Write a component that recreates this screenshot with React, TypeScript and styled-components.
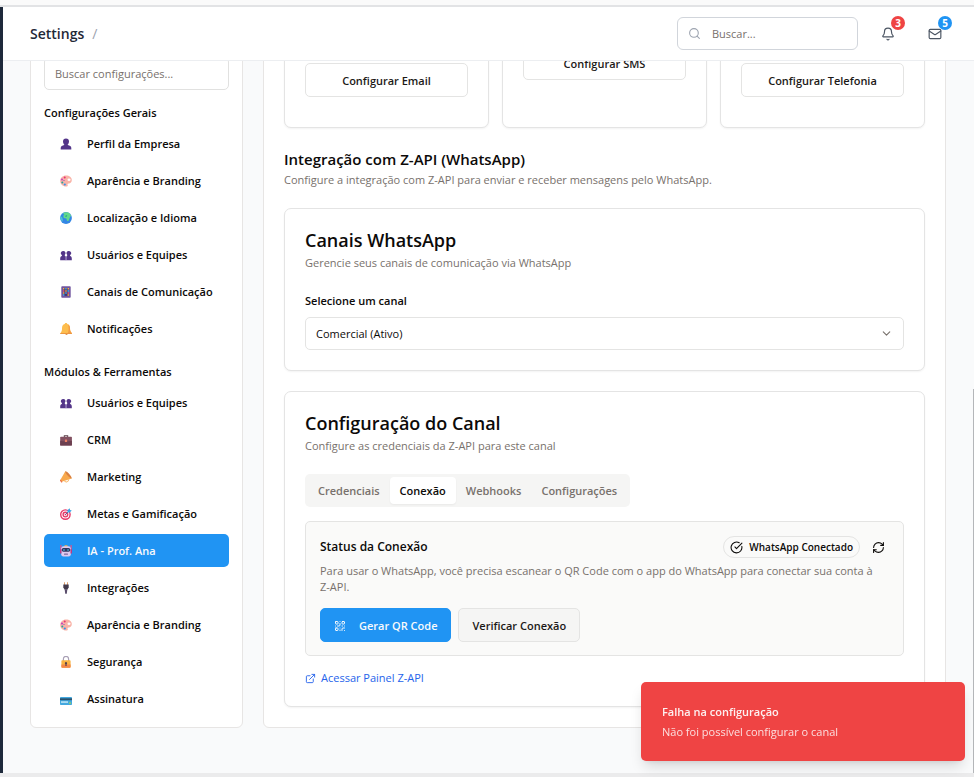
import React, { useState } from "react";
import styled, { createGlobalStyle, css } from "styled-components";
import { Bell, ChevronDown, CircleCheckBig, ExternalLink, Mail, QrCode, RefreshCw, Search } from "lucide-react";

const Global = createGlobalStyle`
  *, *::before, *::after { box-sizing: border-box; }
  body { margin: 0; background: #f9fafb; }
  body, button, input, select {
    font-family: "Open Sans", "Noto Sans", sans-serif;
    font-size: 11px;
    line-height: 16px;
    color: #0c0a09;
  }
  h1, h2, h3, h4, p, ul { margin: 0; padding: 0; font-weight: inherit; }
  ul { list-style: none; }
`;

const Page = styled.div`
  height: 100vh;
  display: flex;
  flex-direction: column;
  overflow: hidden;
`;
const TopStrip = styled.div`
  flex: none;
  height: 7px;
  background: #fafafa;
  border-bottom: 2px solid #e2e3e5;
`;
const BottomStrip = styled.div`
  flex: none;
  height: 4px;
  background: #ebebec;
`;
const Shell = styled.div`
  flex: 1;
  min-height: 0;
  display: flex;
`;
const Rail = styled.div`
  flex: none;
  width: 3px;
  background: #1e293b;
`;
const Column = styled.div`
  flex: 1;
  min-width: 0;
  display: flex;
  flex-direction: column;
`;
const Header = styled.header`
  flex: none;
  height: 54px;
  padding: 0 32px 0 27px;
  display: flex;
  align-items: center;
  background: #fff;
  border-bottom: 1px solid #eceef1;
`;
const PageTitle = styled.h1`
  font-size: 14px;
  line-height: 20px;
  font-weight: 600;
  color: #1f2937;
`;
const Slash = styled.span`
  margin-left: 8px;
  flex: 1;
  font-size: 14px;
  color: #9ca3af;
`;
const SearchBox = styled.label`
  width: 181px;
  height: 33px;
  padding: 0 12px 0 10px;
  display: flex;
  align-items: center;
  gap: 11px;
  border: 1px solid #d1d5db;
  border-radius: 6px;
  color: #9ca3af;
  svg { flex: none; }
`;
const BareInput = styled.input`
  min-width: 0;
  flex: 1;
  border: 0;
  padding: 0;
  outline: 0;
  background: none;
  &::placeholder { color: #78716c; opacity: 1; }
`;
const HeaderButton = styled.button<{ $gap: number }>`
  position: relative;
  width: 14px;
  height: 14px;
  margin-left: ${(p) => p.$gap}px;
  padding: 0;
  border: 0;
  background: none;
  color: #4b5563;
  svg { display: block; }
`;
const Count = styled.span<{ $color: string }>`
  position: absolute;
  top: -11px;
  left: 10px;
  width: 14px;
  height: 14px;
  border-radius: 50%;
  background: ${(p) => p.$color};
  color: #fff;
  font-size: 10px;
  line-height: 14px;
  font-weight: 700;
  text-align: center;
`;
const ScrollArea = styled.div`
  position: relative;
  flex: 1;
  min-height: 0;
  overflow: hidden;
  display: flex;
  flex-direction: column;
  justify-content: flex-end;
  padding: 0 28px 45px 27px;
  background: #f9fafb;
`;
const ScrollThumb = styled.div`
  position: absolute;
  right: 0;
  bottom: 0;
  width: 1px;
  height: 54%;
  background: #b4b6b9;
`;
const Columns = styled.div`
  display: flex;
  gap: 20px;
`;
const Panel = css`
  background: #fff;
  border: 1px solid #e7e5e4;
  border-radius: 6px;
`;
const Sidebar = styled.nav`
  ${Panel}
  flex: none;
  width: 213px;
  padding: 12px 13px;
  display: flex;
  flex-direction: column;
  justify-content: flex-end;
`;
const FilterBox = styled.label`
  height: 33px;
  padding: 0 10px;
  display: flex;
  align-items: center;
  border: 1px solid #e1e1e0;
  border-radius: 5px;
`;
const GroupTitle = styled.h2<{ $gap: number }>`
  margin: ${(p) => p.$gap}px 0 5px;
  font-size: 11px;
  line-height: 18px;
  font-weight: 600;
`;
const NavList = styled.ul`
  display: flex;
  flex-direction: column;
  gap: 4px;
`;
const NavButton = styled.button<{ $active?: boolean }>`
  width: 100%;
  height: 33px;
  padding: 0 14px;
  display: flex;
  align-items: center;
  gap: 14px;
  border: 0;
  border-radius: 5px;
  text-align: left;
  font-weight: 600;
  white-space: nowrap;
  background: ${(p) => (p.$active ? "#2094f3" : "transparent")};
  color: ${(p) => (p.$active ? "#f8fafc" : "#0c0a09")};
  svg { flex: none; margin: 0 1px 0 2px; }
`;
const Main = styled.main`
  ${Panel}
  flex: 1;
  min-width: 0;
  padding: 20px;
`;
const CardRow = styled.div`
  display: grid;
  grid-template-columns: repeat(3, minmax(0, 1fr));
  gap: 13px;
`;
const Card = styled.section`
  background: #fff;
  border: 1px solid #e4e4e4;
  border-radius: 7px;
  padding: 20px;
  box-shadow: 0 1px 2px rgba(0, 0, 0, 0.05);
`;
const ServiceCard = styled(Card)`
  padding-bottom: 30px;
`;
const ServiceIntro = styled.div<{ $lines: number }>`
  min-height: ${(p) => p.$lines * 17}px;
`;
const Button = styled.button<{ $kind?: "primary" | "muted"; $wide?: boolean }>`
  width: ${(p) => (p.$wide ? "100%" : "auto")};
  height: 34px;
  padding: 2px 13px 0;
  display: inline-flex;
  align-items: center;
  justify-content: center;
  gap: 13px;
  border-radius: 5px;
  border: 1px solid ${(p) => (p.$kind === "primary" ? "#2094f3" : "#e4e4e3")};
  background: ${(p) => (p.$kind === "primary" ? "#2094f3" : p.$kind === "muted" ? "#f5f5f4" : "#fff")};
  color: ${(p) => (p.$kind === "primary" ? "#f8fafc" : "#1c1917")};
  font-weight: 600;
  white-space: nowrap;
`;
const SectionHead = styled.div`
  margin: 22px 0 20px;
`;
const SectionTitle = styled.h2`
  font-size: 15px;
  line-height: 18px;
  font-weight: 600;
`;
const CardTitle = styled.h3`
  font-size: 18px;
  line-height: 22px;
  font-weight: 600;
`;
const Muted = styled.p`
  margin-top: 4px;
  color: #78716c;
`;
const Label = styled.label`
  display: block;
  margin: 22px 0 8px;
  font-weight: 600;
`;
const SelectWrap = styled.div`
  display: grid;
  align-items: center;
  > * { grid-area: 1 / 1; }
  svg { justify-self: end; margin-right: 11px; pointer-events: none; color: #78716c; }
`;
const Select = styled.select`
  appearance: none;
  width: 100%;
  height: 33px;
  padding: 0 30px 0 10px;
  border: 1px solid #e4e4e3;
  border-radius: 5px;
  background: #fff;
`;
const ChannelCard = styled(Card)`
  margin-top: 20px;
`;
const Tabs = styled.div`
  width: fit-content;
  height: 33px;
  margin: 20px 0 14px;
  padding: 3px;
  display: flex;
  background: #f5f5f4;
  border-radius: 5px;
`;
const Tab = styled.button<{ $active: boolean }>`
  padding: 0 10px;
  border: 0;
  border-radius: 4px;
  font-weight: 600;
  background: ${(p) => (p.$active ? "#fff" : "transparent")};
  color: ${(p) => (p.$active ? "#0c0a09" : "#78716c")};
  box-shadow: ${(p) => (p.$active ? "0 1px 2px rgba(0,0,0,0.05)" : "none")};
`;
const StatusPanel = styled.div`
  padding: 14px 14px 13px;
  border: 1px solid #e4e4e3;
  border-radius: 5px;
  background: #fafaf9;
`;
const StatusHead = styled.div`
  display: flex;
  align-items: center;
`;
const StatusTitle = styled.h4`
  flex: 1;
  font-size: 12px;
  font-weight: 600;
`;
const Badge = styled.span`
  height: 22px;
  padding: 0 6px;
  display: inline-flex;
  align-items: center;
  gap: 6px;
  border: 1px solid #e4e4e3;
  border-radius: 11px;
  font-size: 10px;
  font-weight: 600;
`;
const IconButton = styled.button`
  width: 22px;
  height: 22px;
  margin: 0 0 0 7px;
  padding: 0;
  display: grid;
  place-items: center;
  border: 0;
  background: none;
`;
const StatusText = styled.p`
  margin: 5px 0 13px;
  color: #78716c;
`;
const NoBreak = styled.span`
  white-space: nowrap;
`;
const Actions = styled.div`
  display: flex;
  gap: 7px;
`;
const PanelLink = styled.a`
  width: fit-content;
  margin-top: 14px;
  display: flex;
  align-items: center;
  gap: 5px;
  color: #2563eb;
  text-decoration: none;
`;
const Toast = styled.div`
  position: fixed;
  right: 9px;
  bottom: 16px;
  width: 324px;
  padding: 21px;
  border-radius: 5px;
  background: #ef4444;
  color: #fbdede;
  box-shadow: 0 8px 14px -3px rgba(0, 0, 0, 0.15), 0 3px 6px -4px rgba(0, 0, 0, 0.12);
`;
const ToastTitle = styled.p`
  margin: 1px 0 4px;
  font-weight: 600;
  color: #fdf0f0;
`;

type EmojiName =
  | "person" | "palette" | "globe" | "people" | "grid" | "bell" | "briefcase"
  | "horn" | "target" | "robot" | "plug" | "lock" | "card";

const drawings: Record<EmojiName, React.ReactNode> = {
  person: (
    <g fill="#533589">
      <path d="M6 0.4a3 3 0 0 1 3 3c0 1.600-.8 2.800-1.600 3.500v.7H4.600v-.7C3.800 6.200 3 5 3 3.400a3 3 0 0 1 3-3z" />
      <path d="M.7 11.500V10c0-1.700 1.700-2.500 3.500-2.900h3.600c1.800.4 3.500 1.200 3.500 2.900v1.500z" />
    </g>
  ),
  palette: (
    <>
      <path d="M6 .6C9.400.6 11.800 2.600 11.800 5c0 2.300-1.500 3.500-3.200 3.400-1.200 0-1.200.8-.9 1.500.4 1-.4 1.700-1.700 1.700C2.700 11.600.2 9.200.2 6.100.2 3 2.700.6 6 .6z" fill="#f9b3a7" />
      <ellipse cx="9" cy="4.800" rx="1.500" ry="1.200" fill="#fff" />
      <circle cx="2" cy="4.500" r="1" fill="#c13fc4" />
      <circle cx="4.700" cy="2.500" r="1" fill="#e73573" />
      <circle cx="2.300" cy="7.400" r="1" fill="#26a69a" />
      <circle cx="4.800" cy="9.500" r="1.100" fill="#3496ee" />
      <circle cx="4" cy="5.500" r=".6" fill="#7846b8" />
    </>
  ),
  globe: (
    <>
      <circle cx="6" cy="6" r="5.900" fill="#3387e5" />
      <path d="M3 1c2-1.100 5-1 6.400.2l1.700 2.400-1.300 1.900-1.200 3.200-1.500.3-.7-2.500-2.700-.6-.5-2.300 1.200-.7z" fill="#62d98b" />
      <path d="M.3 4.500 2 5l.9 2.500-.5 2.200A5.900 5.900 0 0 1 .3 4.500z" fill="#4fc3d4" />
      <path d="m6 3 1.300.4L6.500 5 5 4.700z" fill="#2cae8c" />
    </>
  ),
  people: (
    <g fill="#533589">
      <path d="M3.200 1.900a2.200 2.200 0 0 1 1.600 3.800v1l1.100 1V11.200H.2V9.400c0-1.300.7-1.900 1.700-2.300V6a2.200 2.200 0 0 1 1.300-4.100z" />
      <path d="M8.800 1.900a2.200 2.200 0 0 0-1.600 3.800v1l-1 1V11.200h5.600V9.400c0-1.300-.7-1.900-1.700-2.300V6a2.200 2.200 0 0 0-1.300-4.100z" />
      <path d="M5.500 8h1v3.200h-1z" fill="#9b83c3" />
    </g>
  ),
  grid: (
    <>
      <rect x="1.300" y=".3" width="9.400" height="11.500" rx=".8" fill="#72569f" />
      <rect x="3" y="2" width="6" height="7.800" fill="#413476" />
      <g fill="#ffb13d"><path d="M3 2h1.400v1.500H3zM7.500 2H9v1.500H7.500zM5.300 4.200h1.400v1.500H5.300zM3 6.300h1.400v1.500H3zM7.500 8.200H9v1.500H7.500z" /></g>
      <g fill="#45b8ef"><path d="M5.300 2h1.400v1.500H5.300zM7.500 4.200H9v1.500H7.500zM5.300 6.300h1.400v1.500H5.300zM3 8.200h1.400v1.500H3z" /></g>
      <g fill="#f45b73"><path d="M3 4.200h1.400v1.500H3zM7.500 6.300H9v1.500H7.500z" /></g>
    </>
  ),
  bell: (
    <>
      <circle cx="6.500" cy="10.600" r="1.300" fill="#d98b43" />
      <path d="M6 .1c.8 0 1.200.5 1.300 1C9.300 1.700 10 3.200 10 5.200c0 2 .3 3.200 1.800 4.900v.9H.3v-.8C1.800 8.500 2 7.200 2 5.200c0-2 .8-3.500 2.700-4.100C4.800.6 5.200.1 6 .1z" fill="#fdbd4d" />
      <path d="M8 1.500c1.600.8 2 2.300 2 3.900 0 2 .5 3.300 1.800 4.600v1H7.300C9 8.600 9 4.500 8 1.500z" fill="#f39b45" />
      <path d="M.4 10h11.300v1H.4z" fill="#ed973f" />
    </>
  ),
  briefcase: (
    <>
      <path d="M3.800 3V1.300h4.400V3H7.200v-.8H4.800V3z" fill="#59404a" />
      <rect x=".2" y="2.700" width="11.700" height="8.900" rx=".7" fill="#825161" />
      <path d="M.2 6.800c3.500.9 8 .9 11.700 0v4.100c0 .5-.3.700-.7.700H.9c-.4 0-.7-.2-.7-.7z" fill="#6c4050" />
      <rect x="4.900" y="5.500" width="2.200" height="2.600" rx=".4" fill="#ee8063" />
    </>
  ),
  horn: (
    <>
      <path d="M5.200.4C7 1 11 4.500 11.700 7.500L1.700 10.800.3 9z" fill="#f8aa4e" />
      <path d="M5.200.4c1.800-.5 6.300 4.800 6.500 7.100-2.300-.8-5.800-4.200-6.500-7.100z" fill="#d98142" />
      <path d="M4.500 9.200c.3 2.700 4 2.400 4.300-.9" fill="none" stroke="#f9b86b" strokeWidth="1.100" />
      <path d="m.2 9 1.800 2.300" stroke="#ee7148" strokeWidth="1.300" />
    </>
  ),
  target: (
    <>
      <circle cx="5.400" cy="6.600" r="4.700" fill="#fff" stroke="#e63969" strokeWidth="1.400" />
      <circle cx="5.400" cy="6.600" r="2.300" fill="#fff" stroke="#e63969" strokeWidth="1.400" />
      <circle cx="5.400" cy="6.600" r=".8" fill="#e63969" />
      <path d="m5.500 6.500 3-3" stroke="#34699d" strokeWidth=".9" />
      <path d="M7.500 4.500V2.300L9.600.2l.5 1.700 1.700.6-2.100 2z" fill="#38a6e6" />
    </>
  ),
  robot: (
    <>
      <path d="M.3 0h1.200v5H.3zM10.500 0h1.200v5h-1.200z" fill="#e94d80" />
      <path d="M4 1.800C4 .5 5 .2 6 .2s2 .3 2 1.600z" fill="#ffb443" />
      <rect x="1.200" y="1.300" width="9.600" height="10.300" rx="2.300" fill="#dec9ef" />
      <rect x="0" y="4.300" width="1.500" height="4.200" rx=".5" fill="#bd3b81" />
      <rect x="10.500" y="4.300" width="1.500" height="4.200" rx=".5" fill="#bd3b81" />
      <rect x="1.700" y="3.100" width="8.600" height="3.700" rx="1.700" fill="#31365f" />
      <path d="M3.300 4.200h1.300v1.500H3.300zM7.400 4.200h1.300v1.500H7.400z" fill="#4cc8ef" />
      <rect x="4" y="8.500" width="4" height="1.300" rx=".4" fill="#7d669c" />
    </>
  ),
  plug: (
    <>
      <path d="M4.100.2h.9v3h-.9zM7 .2h.9v3H7z" fill="#d99762" />
      <path d="M3.300 2.500h5.400v3L7.300 7.800H4.700L3.300 5.500z" fill="#433b4c" />
      <path d="M4.700 7.500h2.600L6.800 11.800H5.200z" fill="#594c6b" />
    </>
  ),
  lock: (
    <>
      <path d="M3.400 5V3a2.600 2.600 0 0 1 5.200 0v2" fill="none" stroke="#a9a0b5" strokeWidth="1.200" />
      <rect x="1.400" y="4.300" width="9.200" height="7.500" rx=".8" fill="#f9b342" />
      <path d="M1.400 8.600h9.200V11c0 .5-.3.800-.8.800H2.200c-.5 0-.8-.3-.8-.8z" fill="#f48749" />
      <path d="M6 6a1.200 1.200 0 0 1 .6 2.200v1.900H5.400V8.200A1.200 1.200 0 0 1 6 6z" fill="#56404c" />
    </>
  ),
  card: (
    <>
      <rect x="0" y="4" width="12" height="8" rx=".8" fill="#43a8df" />
      <path d="M0 5.300h12V7.200H0z" fill="#28526f" />
      <path d="M1 8.400h7v1.300H1z" fill="#d8f1fb" />
      <path d="M9 9.300h2v1.600H9z" fill="#85c878" />
    </>
  ),
};

const Emoji = ({ name }: { name: EmojiName }) => (
  <svg width="12" height="12" viewBox="0 0 12 12" aria-hidden="true">{drawings[name]}</svg>
);

const general: [EmojiName, string][] = [
  ["person", "Perfil da Empresa"],
  ["palette", "Aparência e Branding"],
  ["globe", "Localização e Idioma"],
  ["people", "Usuários e Equipes"],
  ["grid", "Canais de Comunicação"],
  ["bell", "Notificações"],
];
const modules: [EmojiName, string][] = [
  ["people", "Usuários e Equipes"],
  ["briefcase", "CRM"],
  ["horn", "Marketing"],
  ["target", "Metas e Gamificação"],
  ["robot", "IA - Prof. Ana"],
  ["plug", "Integrações"],
  ["palette", "Aparência e Branding"],
  ["lock", "Segurança"],
  ["card", "Assinatura"],
];
const services: [string, number][] = [
  ["Configurar Email", 3],
  ["Configurar SMS", 2],
  ["Configurar Telefonia", 3],
];
const tabs = ["Credenciais", "Conexão", "Webhooks", "Configurações"];

const NavGroup = ({ items, active }: { items: [EmojiName, string][]; active?: string }) => (
  <NavList>
    {items.map(([icon, text]) => (
      <li key={text}>
        <NavButton type="button" $active={text === active} aria-current={text === active ? "page" : undefined}>
          <Emoji name={icon} />
          {text}
        </NavButton>
      </li>
    ))}
  </NavList>
);

export default function App() {
  const [tab, setTab] = useState("Conexão");
  return (
    <>
      <Global />
      <Page>
        <TopStrip />
        <Shell>
          <Rail />
          <Column>
            <Header>
              <PageTitle>Settings</PageTitle>
              <Slash>/</Slash>
              <SearchBox>
                <Search size={13} />
                <BareInput type="search" placeholder="Buscar..." aria-label="Buscar" />
              </SearchBox>
              <HeaderButton type="button" aria-label="Notificações" $gap={23}>
                <Bell size={14} />
                <Count $color="#ef4444">3</Count>
              </HeaderButton>
              <HeaderButton type="button" aria-label="Mensagens" $gap={33}>
                <Mail size={14} />
                <Count $color="#2094f3">5</Count>
              </HeaderButton>
            </Header>
            <ScrollArea>
              <Columns>
                <Sidebar>
                  <FilterBox>
                    <BareInput type="text" placeholder="Buscar configurações..." aria-label="Buscar configurações" />
                  </FilterBox>
                  <GroupTitle $gap={14}>Configurações Gerais</GroupTitle>
                  <NavGroup items={general} />
                  <GroupTitle $gap={18}>Módulos &amp; Ferramentas</GroupTitle>
                  <NavGroup items={modules} active="IA - Prof. Ana" />
                </Sidebar>
                <Main>
                  <CardRow>
                    {services.map(([text, lines]) => (
                      <ServiceCard key={text}>
                        <ServiceIntro $lines={lines} />
                        <Button type="button" $wide>{text}</Button>
                      </ServiceCard>
                    ))}
                  </CardRow>
                  <SectionHead>
                    <SectionTitle>Integração com Z-API (WhatsApp)</SectionTitle>
                    <Muted>Configure a integração com Z-API para enviar e receber mensagens pelo WhatsApp.</Muted>
                  </SectionHead>
                  <Card>
                    <CardTitle>Canais WhatsApp</CardTitle>
                    <Muted>Gerencie seus canais de comunicação via WhatsApp</Muted>
                    <Label htmlFor="channel">Selecione um canal</Label>
                    <SelectWrap>
                      <Select id="channel">
                        <option>Comercial (Ativo)</option>
                      </Select>
                      <ChevronDown size={13} strokeWidth={2} />
                    </SelectWrap>
                  </Card>
                  <ChannelCard>
                    <CardTitle>Configuração do Canal</CardTitle>
                    <Muted>Configure as credenciais da Z-API para este canal</Muted>
                    <Tabs role="tablist">
                      {tabs.map((t) => (
                        <Tab key={t} type="button" role="tab" aria-selected={t === tab} $active={t === tab} onClick={() => setTab(t)}>
                          {t}
                        </Tab>
                      ))}
                    </Tabs>
                    <StatusPanel role="tabpanel">
                      <StatusHead>
                        <StatusTitle>Status da Conexão</StatusTitle>
                        <Badge>
                          <CircleCheckBig size={13} />
                          WhatsApp Conectado
                        </Badge>
                        <IconButton type="button" aria-label="Atualizar">
                          <RefreshCw size={13} />
                        </IconButton>
                      </StatusHead>
                      <StatusText>
                        Para usar o WhatsApp, você precisa escanear o QR Code com o app do WhatsApp para conectar sua conta à{" "}
                        <NoBreak>Z-API.</NoBreak>
                      </StatusText>
                      <Actions>
                        <Button type="button" $kind="primary">
                          <QrCode size={12} />
                          Gerar QR Code
                        </Button>
                        <Button type="button" $kind="muted">Verificar Conexão</Button>
                      </Actions>
                    </StatusPanel>
                    <PanelLink href="#painel">
                      <ExternalLink size={11} />
                      Acessar Painel Z-API
                    </PanelLink>
                  </ChannelCard>
                </Main>
              </Columns>
              <ScrollThumb />
            </ScrollArea>
          </Column>
        </Shell>
        <BottomStrip />
      </Page>
      <Toast role="alert">
        <ToastTitle>Falha na configuração</ToastTitle>
        <p>Não foi possível configurar o canal</p>
      </Toast>
    </>
  );
}
